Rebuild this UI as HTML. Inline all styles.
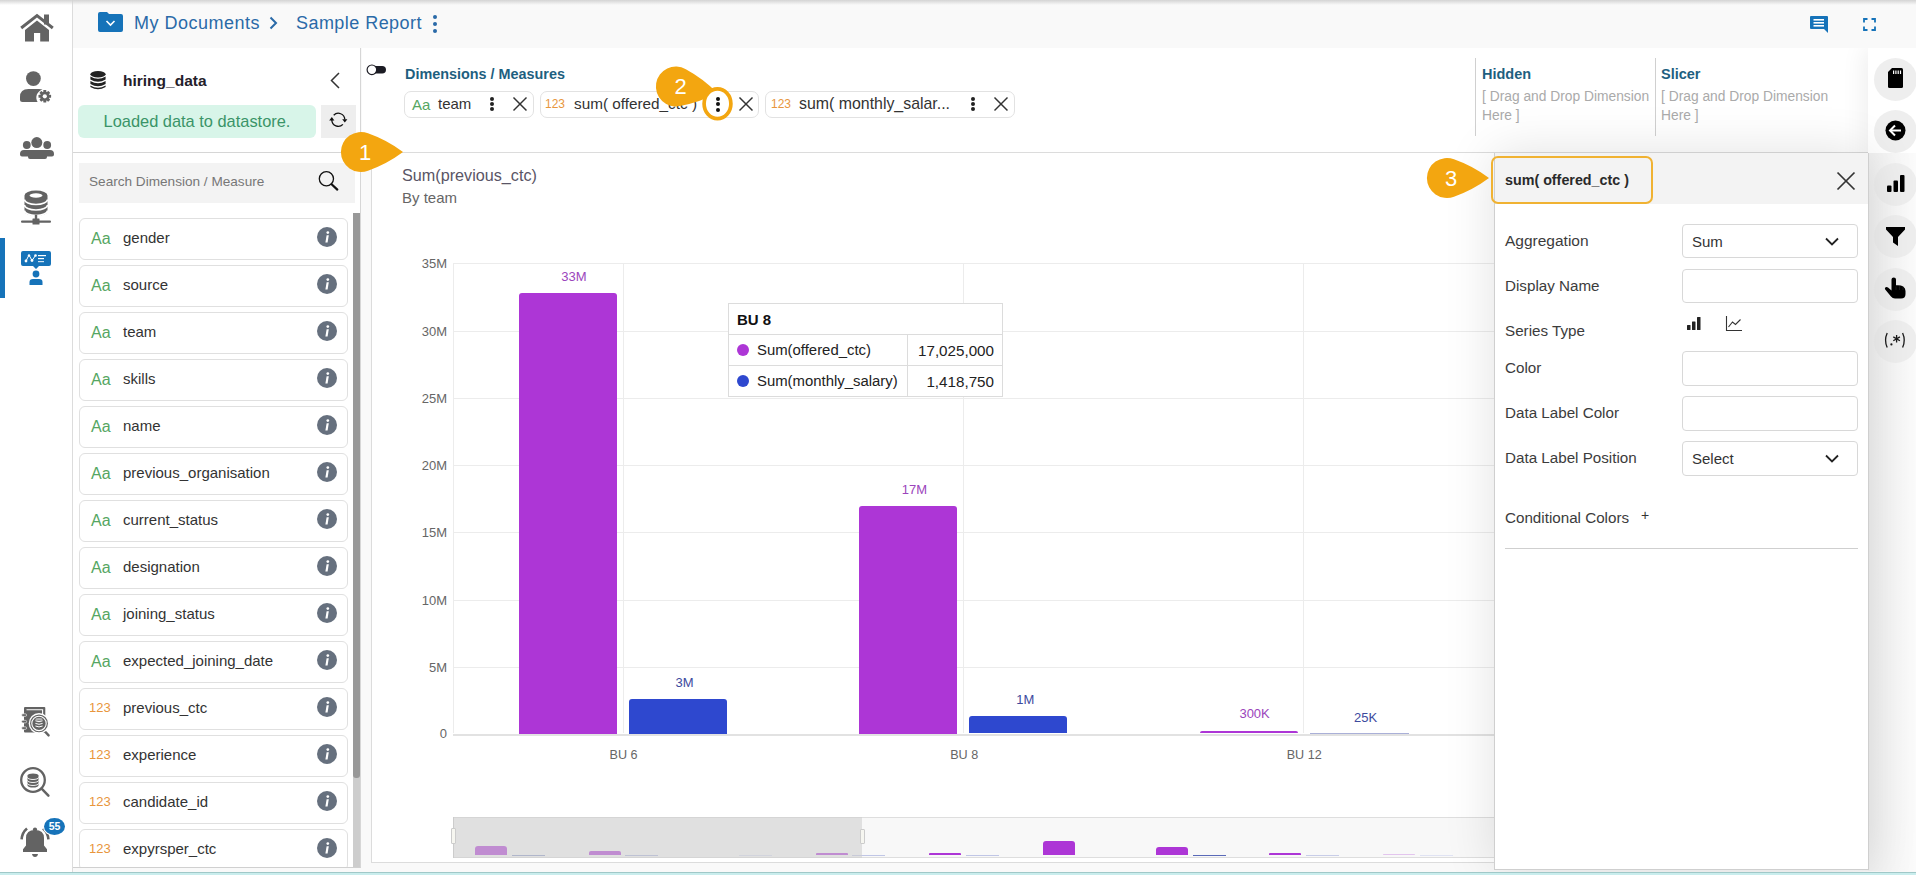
<!DOCTYPE html>
<html><head><meta charset="utf-8">
<style>
*{box-sizing:border-box;margin:0;padding:0}
html,body{width:1916px;height:875px;overflow:hidden;background:#fff;font-family:"Liberation Sans",sans-serif;color:#333}
.a{position:absolute}
.t{position:absolute;white-space:nowrap;line-height:1}
svg{position:absolute;overflow:visible}
</style></head><body>

<!-- main bg -->
<div class="a" style="left:73px;top:48px;width:1843px;height:827px;background:#f9f9f9"></div>

<!-- header -->
<div class="a" style="left:73px;top:0;width:1843px;height:48px;background:#f9f9f9"></div>
<div class="a" style="left:0;top:0;width:1916px;height:5px;background:linear-gradient(#d4d4d4,rgba(255,255,255,0))"></div>

<!-- sidebar -->
<div class="a" style="left:0;top:0;width:73px;height:875px;background:#fff;border-right:1px solid #dcdcdc"></div>
<div class="a" style="left:0;top:0;width:73px;height:5px;background:linear-gradient(#d4d4d4,rgba(255,255,255,0))"></div>

<!-- sidebar icons -->
<svg style="left:20px;top:14px" width="34" height="28" viewBox="0 0 34 28">
  <rect x="24" y="0.5" width="5" height="10" fill="#636363"/>
  <polyline points="1.2,14 17,1.6 32.8,14" fill="none" stroke="#636363" stroke-width="3"/>
  <path d="M5 16 L17 6.6 L29 16 V27.5 H20.2 V19 H14 V27.5 H5 Z" fill="#636363"/>
</svg>
<svg style="left:20px;top:70px" width="32" height="33" viewBox="0 0 32 33">
  <circle cx="13.4" cy="8.6" r="7.4" fill="#636363"/>
  <path d="M0 29.5 V27 Q0 19 8.5 19 H19 Q21 19 22.5 19.6 A8.2 8.2 0 0 0 17.6 32 H2.5 Q0 32 0 29.5 Z" fill="#636363"/>
  <g transform="translate(24.8,26.3)" fill="#636363">
    <circle r="4.6"/><rect x="-1.5" y="-6.3" width="3" height="12.6" rx="0.6" transform="rotate(0)"/><rect x="-1.5" y="-6.3" width="3" height="12.6" rx="0.6" transform="rotate(45)"/><rect x="-1.5" y="-6.3" width="3" height="12.6" rx="0.6" transform="rotate(90)"/><rect x="-1.5" y="-6.3" width="3" height="12.6" rx="0.6" transform="rotate(135)"/>
    <circle r="2.1" fill="#fff"/>
  </g>
</svg>
<svg style="left:20px;top:136px" width="35" height="24" viewBox="0 0 35 24">
  <circle cx="6.8" cy="9" r="3.9" fill="#636363"/>
  <circle cx="27.2" cy="9" r="3.9" fill="#636363"/>
  <circle cx="16.8" cy="6.6" r="5.5" fill="#636363"/>
  <path d="M0 18 Q0 14 4 14 H30 Q34 14 34 18 V18.5 Q34 20.5 32 20.5 H27 V21 Q27 23 25 23 H10 Q8 23 8 21 V20.5 H2 Q0 20.5 0 18.5 Z" fill="#636363"/>
</svg>
<svg style="left:21px;top:190px" width="30" height="35" viewBox="0 0 30 35">
  <path d="M3.5 5.5 A11.5 5 0 0 1 26.5 5.5 V21 A11.5 5 0 0 1 3.5 21 Z" fill="#636363"/>
  <ellipse cx="15" cy="5.5" rx="6.5" ry="2.2" fill="#fff"/>
  <path d="M3.5 9.5 A11.5 5 0 0 0 26.5 9.5" fill="none" stroke="#fff" stroke-width="1.6"/>
  <path d="M3.5 15 A11.5 5 0 0 0 26.5 15" fill="none" stroke="#fff" stroke-width="1.6"/>
  <path d="M3.5 20.5 A11.5 5 0 0 0 26.5 20.5" fill="none" stroke="#fff" stroke-width="1.6"/>
  <rect x="13.8" y="25" width="2.4" height="5" fill="#636363"/>
  <rect x="0" y="30.5" width="30" height="2.2" rx="1" fill="#636363"/>
  <rect x="11.5" y="28.5" width="7" height="6" rx="0.5" fill="#636363"/>
</svg>
<div class="a" style="left:0;top:238px;width:5px;height:60px;background:#1673b9"></div>
<svg style="left:21px;top:251px" width="30" height="35" viewBox="0 0 30 35">
  <path d="M2 0 H28 Q30 0 30 2 V13 Q30 15 28 15 H18 L15 18 L12 15 H2 Q0 15 0 13 V2 Q0 0 2 0 Z" fill="#1673b9"/>
  <polyline points="5,10 8,4 11,9.5 14.5,4.5" fill="none" stroke="#fff" stroke-width="1"/>
  <circle cx="5" cy="10" r="1.4" fill="#fff"/><circle cx="8" cy="4.5" r="1.2" fill="#fff"/><circle cx="11" cy="9.5" r="1.4" fill="#fff"/><circle cx="14.5" cy="4.5" r="1.3" fill="#fff"/>
  <rect x="17" y="4" width="8" height="1.2" fill="#fff"/>
  <rect x="17" y="7" width="6" height="1.2" fill="#fff"/>
  <rect x="17" y="10" width="6" height="1.2" fill="#cfe3f3"/>
  <circle cx="15" cy="23" r="3.4" fill="#1673b9"/>
  <path d="M8.5 34 V31 Q8.5 28 12 28 H18 Q21.5 28 21.5 31 V34 Z" fill="#1673b9"/>
</svg>

<svg style="left:21px;top:706px" width="30" height="31" viewBox="0 0 30 31">
  <rect x="3" y="1" width="21.3" height="25.6" rx="1" fill="#636363"/>
  <path d="M5.5 3.8 H21.6 V12" fill="none" stroke="#fff" stroke-width="1.1"/>
  <rect x="0.6" y="7.8" width="5" height="2.6" rx="1.3" fill="#636363" stroke="#fff" stroke-width="0.6"/>
  <rect x="0.6" y="14.3" width="5" height="2.6" rx="1.3" fill="#636363" stroke="#fff" stroke-width="0.6"/>
  <rect x="0.6" y="20.8" width="5" height="2.6" rx="1.3" fill="#636363" stroke="#fff" stroke-width="0.6"/>
  <line x1="22.5" y1="24" x2="27.6" y2="29.4" stroke="#636363" stroke-width="2.4" stroke-linecap="round"/>
  <circle cx="18" cy="17.4" r="10.3" fill="#fff"/>
  <circle cx="18" cy="17.4" r="8.9" fill="#636363"/>
  <circle cx="18" cy="17.4" r="7.2" fill="none" stroke="#fff" stroke-width="1.1"/>
  <ellipse cx="18" cy="13.2" rx="3.6" ry="1.3" fill="#fff" opacity="0.5"/>
  <path d="M14.4 14.8 Q18 16.6 21.6 14.8 M14.4 17.4 Q18 19.2 21.6 17.4 M14.4 20 Q18 21.8 21.6 20" fill="none" stroke="#fff" stroke-width="1"/>
</svg>
<svg style="left:20px;top:766px" width="30" height="31" viewBox="0 0 30 31">
  <circle cx="13" cy="14" r="11.8" fill="none" stroke="#636363" stroke-width="2.3"/>
  <line x1="21.6" y1="22.6" x2="28.4" y2="29.6" stroke="#636363" stroke-width="2.5" stroke-linecap="round"/>
  <path d="M7.5 9.5 A5.5 2 0 0 1 18.5 9.5 V19.5 A5.5 2 0 0 1 7.5 19.5 Z" fill="#636363"/>
  <path d="M7.5 11.5 A5.5 2 0 0 0 18.5 11.5 M7.5 14.5 A5.5 2 0 0 0 18.5 14.5 M7.5 17.5 A5.5 2 0 0 0 18.5 17.5" fill="none" stroke="#fff" stroke-width="0.9"/>
</svg>
<svg style="left:20px;top:826px" width="30" height="32" viewBox="0 0 30 32">
  <circle cx="15" cy="3.6" r="2.1" fill="#636363"/>
  <path d="M6 12 Q6 4.2 15 4 Q24 4.2 24 12 V19.5 L27 23.3 V26 H3 V23.3 L6 19.5 Z" fill="#636363"/>
  <path d="M12 28 H18 Q17.5 31 15 31 Q12.5 31 12 28 Z" fill="#636363"/>
  <path d="M1.6 13.4 Q2 6.6 7 2.4" fill="none" stroke="#636363" stroke-width="2.6"/>
  <path d="M28.4 13.4 Q28 6.6 23 2.4" fill="none" stroke="#636363" stroke-width="2.6"/>
</svg>
<div class="a" style="left:44px;top:818px;width:21px;height:17px;border-radius:50%;background:#1673b9;box-shadow:0 0 0 1px #fff"></div>
<div class="t" style="left:44px;top:821.3px;width:21px;text-align:center;font-size:10.5px;font-weight:700;color:#fff">55</div>

<!-- header content -->
<svg style="left:98px;top:12px" width="25" height="20" viewBox="0 0 25 20">
  <path d="M2 0 H9 L11 2 H23 Q25 2 25 4 V18 Q25 20 23 20 H2 Q0 20 0 18 V2 Q0 0 2 0 Z" fill="#1673b9"/>
  <polyline points="8.5,9 12.5,13 16.5,9" fill="none" stroke="#fff" stroke-width="1.6"/>
</svg>
<div class="t" style="left:134px;top:14px;font-size:18px;letter-spacing:0.5px;color:#2a6aa8">My Documents</div>
<svg style="left:269px;top:16px" width="9" height="14" viewBox="0 0 9 14"><polyline points="1.5,1.5 7,7 1.5,12.5" fill="none" stroke="#2a6aa8" stroke-width="2"/></svg>
<div class="t" style="left:296px;top:14px;font-size:18px;letter-spacing:0.45px;color:#2a6aa8">Sample Report</div>
<div class="a" style="left:433px;top:15px;width:4px;height:4px;border-radius:2px;background:#2a6aa8"></div>
<div class="a" style="left:433px;top:22px;width:4px;height:4px;border-radius:2px;background:#2a6aa8"></div>
<div class="a" style="left:433px;top:29px;width:4px;height:4px;border-radius:2px;background:#2a6aa8"></div>

<svg style="left:1810px;top:16px" width="18" height="17" viewBox="0 0 18 17">
  <path d="M1 0 H17 Q18 0 18 1 V17 L14 13 H1 Q0 13 0 12 V1 Q0 0 1 0 Z" fill="#1673b9"/>
  <rect x="3.5" y="3" width="10.5" height="1.6" fill="#fff"/><rect x="3.5" y="6" width="10.5" height="1.6" fill="#fff"/><rect x="3.5" y="9" width="10.5" height="1.6" fill="#fff"/>
</svg>
<svg style="left:1863px;top:18px" width="13" height="13" viewBox="0 0 13 13" fill="none" stroke="#1673b9" stroke-width="1.8">
  <polyline points="1,4.5 1,1 4.5,1"/><polyline points="8.5,1 12,1 12,4.5"/><polyline points="12,8.5 12,12 8.5,12"/><polyline points="4.5,12 1,12 1,8.5"/>
</svg>

<!-- left panel -->
<div class="a" style="left:73px;top:48px;width:288px;height:820px;background:#fff;border-right:1px solid #d6d6d6;border-bottom:1px solid #d0d0d0"></div>
<svg style="left:90px;top:71px" width="16" height="19" viewBox="0 0 16 19">
  <ellipse cx="8" cy="3.2" rx="7.6" ry="3.2" fill="#222"/>
  <path d="M0.4 5.5 Q8 10 15.6 5.5 V8.5 Q8 13 0.4 8.5 Z" fill="#222"/>
  <path d="M0.4 10 Q8 14.5 15.6 10 V13 Q8 17.5 0.4 13 Z" fill="#222"/>
  <path d="M0.4 14.5 Q8 19 15.6 14.5 V16 Q8 20.5 0.4 16 Z" fill="#222"/>
</svg>
<div class="t" style="left:123px;top:73px;font-size:15.5px;font-weight:700;color:#24202a">hiring_data</div>
<svg style="left:330px;top:72px" width="10" height="17" viewBox="0 0 10 17"><polyline points="9,1 1.5,8.5 9,16" fill="none" stroke="#333" stroke-width="1.5"/></svg>
<div class="a" style="left:78px;top:105px;width:238px;height:33px;border-radius:6px;background:#d8f5e9"></div>
<div class="t" style="left:78px;top:113px;width:238px;text-align:center;font-size:16.4px;color:#3a9468">Loaded data to datastore.</div>
<div class="a" style="left:321px;top:105px;width:35px;height:33px;background:#eeeeee"></div>
<svg style="left:328px;top:110px" width="21" height="20" viewBox="0 0 21 20">
  <path d="M5.7 5.2 A6.5 6.5 0 0 1 16.8 9.6" fill="none" stroke="#111" stroke-width="1.3"/>
  <path d="M14.9 14.4 A6.5 6.5 0 0 1 3.8 10" fill="none" stroke="#111" stroke-width="1.3"/>
  <path d="M14.2 9.2 H19.4 L16.8 12.6 Z" fill="#111"/>
  <path d="M1.2 10.4 H6.4 L3.8 7 Z" fill="#111"/>
</svg>
<div class="a" style="left:73px;top:152px;width:288px;height:1px;background:#d6d6d6"></div>
<div class="a" style="left:79px;top:163px;width:276px;height:40px;background:#f3f3f3"></div>
<div class="t" style="left:89px;top:175px;font-size:13.6px;color:#777">Search Dimension / Measure</div>
<svg style="left:318px;top:171px" width="21" height="21" viewBox="0 0 21 21" fill="none" stroke="#111">
  <circle cx="8.4" cy="7.8" r="7.1" stroke-width="1.3"/><line x1="13.6" y1="13.2" x2="19.3" y2="18.6" stroke-width="2.2" stroke-linecap="round"/>
</svg>
<!-- scrollbar -->
<div class="a" style="left:353px;top:213px;width:7px;height:654px;background:#cdcdcd"></div>
<div class="a" style="left:353px;top:213px;width:7px;height:565px;background:#999;border-radius:0 0 3px 3px"></div>
<!-- list -->
<div class="a" style="left:0;top:0;width:361px;height:867px;overflow:hidden">
<div class="a" style="left:79px;top:218px;width:269px;height:42px;border:1px solid #e0e0e0;border-radius:6px;background:#fff"></div>
<div class="t" style="left:91px;top:230.5px;font-size:16px;color:#55a662">Aa</div><div class="t" style="left:123px;top:230px;font-size:15px;color:#333">gender</div>
<svg style="left:317px;top:227.0px" width="20" height="20" viewBox="0 0 20 20"><circle cx="10" cy="10" r="10" fill="#66707e"/><circle cx="10.8" cy="5.6" r="1.35" fill="#fff"/><path d="M9.6 8.3 H11.8 L10.6 15.6 H8.4 Z" fill="#fff"/></svg>
<div class="a" style="left:79px;top:265px;width:269px;height:42px;border:1px solid #e0e0e0;border-radius:6px;background:#fff"></div>
<div class="t" style="left:91px;top:277.5px;font-size:16px;color:#55a662">Aa</div><div class="t" style="left:123px;top:277px;font-size:15px;color:#333">source</div>
<svg style="left:317px;top:274.0px" width="20" height="20" viewBox="0 0 20 20"><circle cx="10" cy="10" r="10" fill="#66707e"/><circle cx="10.8" cy="5.6" r="1.35" fill="#fff"/><path d="M9.6 8.3 H11.8 L10.6 15.6 H8.4 Z" fill="#fff"/></svg>
<div class="a" style="left:79px;top:312px;width:269px;height:42px;border:1px solid #e0e0e0;border-radius:6px;background:#fff"></div>
<div class="t" style="left:91px;top:324.5px;font-size:16px;color:#55a662">Aa</div><div class="t" style="left:123px;top:324px;font-size:15px;color:#333">team</div>
<svg style="left:317px;top:321.0px" width="20" height="20" viewBox="0 0 20 20"><circle cx="10" cy="10" r="10" fill="#66707e"/><circle cx="10.8" cy="5.6" r="1.35" fill="#fff"/><path d="M9.6 8.3 H11.8 L10.6 15.6 H8.4 Z" fill="#fff"/></svg>
<div class="a" style="left:79px;top:359px;width:269px;height:42px;border:1px solid #e0e0e0;border-radius:6px;background:#fff"></div>
<div class="t" style="left:91px;top:371.5px;font-size:16px;color:#55a662">Aa</div><div class="t" style="left:123px;top:371px;font-size:15px;color:#333">skills</div>
<svg style="left:317px;top:368.0px" width="20" height="20" viewBox="0 0 20 20"><circle cx="10" cy="10" r="10" fill="#66707e"/><circle cx="10.8" cy="5.6" r="1.35" fill="#fff"/><path d="M9.6 8.3 H11.8 L10.6 15.6 H8.4 Z" fill="#fff"/></svg>
<div class="a" style="left:79px;top:406px;width:269px;height:42px;border:1px solid #e0e0e0;border-radius:6px;background:#fff"></div>
<div class="t" style="left:91px;top:418.5px;font-size:16px;color:#55a662">Aa</div><div class="t" style="left:123px;top:418px;font-size:15px;color:#333">name</div>
<svg style="left:317px;top:415.0px" width="20" height="20" viewBox="0 0 20 20"><circle cx="10" cy="10" r="10" fill="#66707e"/><circle cx="10.8" cy="5.6" r="1.35" fill="#fff"/><path d="M9.6 8.3 H11.8 L10.6 15.6 H8.4 Z" fill="#fff"/></svg>
<div class="a" style="left:79px;top:453px;width:269px;height:42px;border:1px solid #e0e0e0;border-radius:6px;background:#fff"></div>
<div class="t" style="left:91px;top:465.5px;font-size:16px;color:#55a662">Aa</div><div class="t" style="left:123px;top:465px;font-size:15px;color:#333">previous_organisation</div>
<svg style="left:317px;top:462.0px" width="20" height="20" viewBox="0 0 20 20"><circle cx="10" cy="10" r="10" fill="#66707e"/><circle cx="10.8" cy="5.6" r="1.35" fill="#fff"/><path d="M9.6 8.3 H11.8 L10.6 15.6 H8.4 Z" fill="#fff"/></svg>
<div class="a" style="left:79px;top:500px;width:269px;height:42px;border:1px solid #e0e0e0;border-radius:6px;background:#fff"></div>
<div class="t" style="left:91px;top:512.5px;font-size:16px;color:#55a662">Aa</div><div class="t" style="left:123px;top:512px;font-size:15px;color:#333">current_status</div>
<svg style="left:317px;top:509.0px" width="20" height="20" viewBox="0 0 20 20"><circle cx="10" cy="10" r="10" fill="#66707e"/><circle cx="10.8" cy="5.6" r="1.35" fill="#fff"/><path d="M9.6 8.3 H11.8 L10.6 15.6 H8.4 Z" fill="#fff"/></svg>
<div class="a" style="left:79px;top:547px;width:269px;height:42px;border:1px solid #e0e0e0;border-radius:6px;background:#fff"></div>
<div class="t" style="left:91px;top:559.5px;font-size:16px;color:#55a662">Aa</div><div class="t" style="left:123px;top:559px;font-size:15px;color:#333">designation</div>
<svg style="left:317px;top:556.0px" width="20" height="20" viewBox="0 0 20 20"><circle cx="10" cy="10" r="10" fill="#66707e"/><circle cx="10.8" cy="5.6" r="1.35" fill="#fff"/><path d="M9.6 8.3 H11.8 L10.6 15.6 H8.4 Z" fill="#fff"/></svg>
<div class="a" style="left:79px;top:594px;width:269px;height:42px;border:1px solid #e0e0e0;border-radius:6px;background:#fff"></div>
<div class="t" style="left:91px;top:606.5px;font-size:16px;color:#55a662">Aa</div><div class="t" style="left:123px;top:606px;font-size:15px;color:#333">joining_status</div>
<svg style="left:317px;top:603.0px" width="20" height="20" viewBox="0 0 20 20"><circle cx="10" cy="10" r="10" fill="#66707e"/><circle cx="10.8" cy="5.6" r="1.35" fill="#fff"/><path d="M9.6 8.3 H11.8 L10.6 15.6 H8.4 Z" fill="#fff"/></svg>
<div class="a" style="left:79px;top:641px;width:269px;height:42px;border:1px solid #e0e0e0;border-radius:6px;background:#fff"></div>
<div class="t" style="left:91px;top:653.5px;font-size:16px;color:#55a662">Aa</div><div class="t" style="left:123px;top:653px;font-size:15px;color:#333">expected_joining_date</div>
<svg style="left:317px;top:650.0px" width="20" height="20" viewBox="0 0 20 20"><circle cx="10" cy="10" r="10" fill="#66707e"/><circle cx="10.8" cy="5.6" r="1.35" fill="#fff"/><path d="M9.6 8.3 H11.8 L10.6 15.6 H8.4 Z" fill="#fff"/></svg>
<div class="a" style="left:79px;top:688px;width:269px;height:42px;border:1px solid #e0e0e0;border-radius:6px;background:#fff"></div>
<div class="t" style="left:89px;top:701px;font-size:13px;color:#e8963c">123</div><div class="t" style="left:123px;top:700px;font-size:15px;color:#333">previous_ctc</div>
<svg style="left:317px;top:697.0px" width="20" height="20" viewBox="0 0 20 20"><circle cx="10" cy="10" r="10" fill="#66707e"/><circle cx="10.8" cy="5.6" r="1.35" fill="#fff"/><path d="M9.6 8.3 H11.8 L10.6 15.6 H8.4 Z" fill="#fff"/></svg>
<div class="a" style="left:79px;top:735px;width:269px;height:42px;border:1px solid #e0e0e0;border-radius:6px;background:#fff"></div>
<div class="t" style="left:89px;top:748px;font-size:13px;color:#e8963c">123</div><div class="t" style="left:123px;top:747px;font-size:15px;color:#333">experience</div>
<svg style="left:317px;top:744.0px" width="20" height="20" viewBox="0 0 20 20"><circle cx="10" cy="10" r="10" fill="#66707e"/><circle cx="10.8" cy="5.6" r="1.35" fill="#fff"/><path d="M9.6 8.3 H11.8 L10.6 15.6 H8.4 Z" fill="#fff"/></svg>
<div class="a" style="left:79px;top:782px;width:269px;height:42px;border:1px solid #e0e0e0;border-radius:6px;background:#fff"></div>
<div class="t" style="left:89px;top:795px;font-size:13px;color:#e8963c">123</div><div class="t" style="left:123px;top:794px;font-size:15px;color:#333">candidate_id</div>
<svg style="left:317px;top:791.0px" width="20" height="20" viewBox="0 0 20 20"><circle cx="10" cy="10" r="10" fill="#66707e"/><circle cx="10.8" cy="5.6" r="1.35" fill="#fff"/><path d="M9.6 8.3 H11.8 L10.6 15.6 H8.4 Z" fill="#fff"/></svg>
<div class="a" style="left:79px;top:829px;width:269px;height:42px;border:1px solid #e0e0e0;border-radius:6px;background:#fff"></div>
<div class="t" style="left:89px;top:842px;font-size:13px;color:#e8963c">123</div><div class="t" style="left:123px;top:841px;font-size:15px;color:#333">expyrsper_ctc</div>
<svg style="left:317px;top:838.0px" width="20" height="20" viewBox="0 0 20 20"><circle cx="10" cy="10" r="10" fill="#66707e"/><circle cx="10.8" cy="5.6" r="1.35" fill="#fff"/><path d="M9.6 8.3 H11.8 L10.6 15.6 H8.4 Z" fill="#fff"/></svg>
</div>

<!-- top config area -->
<div class="a" style="left:362px;top:48px;width:1506px;height:104px;background:#fff"></div>
<div class="a" style="left:362px;top:152px;width:1506px;height:1px;background:#dcdcdc"></div>
<svg style="left:366px;top:64px" width="21" height="13" viewBox="0 0 21 13">
  <path d="M6 2.1 H16.2 A3.75 3.75 0 0 1 16.2 9.6 H6 Z" fill="#1c1c24"/>
  <circle cx="5.9" cy="5.8" r="4.8" fill="#fff" stroke="#1c1c24" stroke-width="1.2"/>
</svg>
<div class="t" style="left:405px;top:67px;font-size:14.4px;font-weight:700;color:#1e5f7f">Dimensions / Measures</div>

<div class="a" style="left:404px;top:91px;width:130px;height:27px;border:1px solid #e2e2e2;border-radius:7px;background:#fff"></div>
<div class="t" style="left:412px;top:97px;font-size:15px;color:#55a662">Aa</div>
<div class="t" style="left:438px;top:96px;font-size:15px;color:#333">team</div>
<div class="a" style="left:490px;top:97px;width:4px;height:4px;border-radius:2px;background:#222"></div><div class="a" style="left:490px;top:102px;width:4px;height:4px;border-radius:2px;background:#222"></div><div class="a" style="left:490px;top:107px;width:4px;height:4px;border-radius:2px;background:#222"></div>
<svg style="left:513px;top:97px" width="14" height="14" viewBox="0 0 14 14" stroke="#333" stroke-width="1.5"><line x1="0.5" y1="0.5" x2="13.5" y2="13.5"/><line x1="13.5" y1="0.5" x2="0.5" y2="13.5"/></svg>

<div class="a" style="left:540px;top:91px;width:219px;height:27px;border:1px solid #e2e2e2;border-radius:7px;background:#fff"></div>
<div class="t" style="left:545px;top:98px;font-size:12px;color:#e8963c">123</div>
<div class="t" style="left:574px;top:96px;font-size:15.3px;color:#333">sum( offered_ctc )</div>
<div class="a" style="left:716px;top:97px;width:4px;height:4px;border-radius:2px;background:#222"></div><div class="a" style="left:716px;top:102px;width:4px;height:4px;border-radius:2px;background:#222"></div><div class="a" style="left:716px;top:107px;width:4px;height:4px;border-radius:2px;background:#222"></div>
<svg style="left:739px;top:97px" width="14" height="14" viewBox="0 0 14 14" stroke="#333" stroke-width="1.5"><line x1="0.5" y1="0.5" x2="13.5" y2="13.5"/><line x1="13.5" y1="0.5" x2="0.5" y2="13.5"/></svg>

<div class="a" style="left:765px;top:91px;width:250px;height:27px;border:1px solid #e2e2e2;border-radius:7px;background:#fff"></div>
<div class="t" style="left:771px;top:98px;font-size:12px;color:#e8963c">123</div>
<div class="t" style="left:799px;top:96px;font-size:15.9px;color:#333">sum( monthly_salar...</div>
<div class="a" style="left:971px;top:97px;width:4px;height:4px;border-radius:2px;background:#222"></div><div class="a" style="left:971px;top:102px;width:4px;height:4px;border-radius:2px;background:#222"></div><div class="a" style="left:971px;top:107px;width:4px;height:4px;border-radius:2px;background:#222"></div>
<svg style="left:994px;top:97px" width="14" height="14" viewBox="0 0 14 14" stroke="#333" stroke-width="1.5"><line x1="0.5" y1="0.5" x2="13.5" y2="13.5"/><line x1="13.5" y1="0.5" x2="0.5" y2="13.5"/></svg>

<div class="a" style="left:1475px;top:58px;width:1px;height:78px;background:#d0d0d0"></div>
<div class="t" style="left:1482px;top:67px;font-size:14.5px;font-weight:700;color:#1e5f7f">Hidden</div>
<div class="t" style="left:1482px;top:89.5px;font-size:13.8px;color:#aaa">[ Drag and Drop Dimension</div>
<div class="t" style="left:1482px;top:109px;font-size:13.8px;color:#aaa">Here ]</div>
<div class="a" style="left:1655px;top:58px;width:1px;height:78px;background:#d0d0d0"></div>
<div class="t" style="left:1661px;top:67px;font-size:14.5px;font-weight:700;color:#1e5f7f">Slicer</div>
<div class="t" style="left:1661px;top:89.5px;font-size:13.8px;color:#aaa">[ Drag and Drop Dimension</div>
<div class="t" style="left:1661px;top:109px;font-size:13.8px;color:#aaa">Here ]</div>

<!-- chart card -->
<div class="a" style="left:371px;top:153px;width:1497px;height:710px;background:#fff;border-left:1px solid #dcdcdc;border-bottom:1px solid #dcdcdc"></div>
<div class="t" style="left:402px;top:167px;font-size:16.2px;color:#5a5566">Sum(previous_ctc)</div>
<div class="t" style="left:402px;top:190px;font-size:15px;color:#666">By team</div>
<!--CHARTSTART-->
<div class="a" style="left:453px;top:263.0px;width:1100px;height:1px;background:#ececec"></div>
<div class="t" style="left:397px;top:256.5px;width:50px;text-align:right;font-size:13px;color:#666">35M</div>
<div class="a" style="left:453px;top:331.0px;width:1100px;height:1px;background:#ececec"></div>
<div class="t" style="left:397px;top:324.5px;width:50px;text-align:right;font-size:13px;color:#666">30M</div>
<div class="a" style="left:453px;top:398.0px;width:1100px;height:1px;background:#ececec"></div>
<div class="t" style="left:397px;top:391.5px;width:50px;text-align:right;font-size:13px;color:#666">25M</div>
<div class="a" style="left:453px;top:465.0px;width:1100px;height:1px;background:#ececec"></div>
<div class="t" style="left:397px;top:458.5px;width:50px;text-align:right;font-size:13px;color:#666">20M</div>
<div class="a" style="left:453px;top:532.0px;width:1100px;height:1px;background:#ececec"></div>
<div class="t" style="left:397px;top:525.5px;width:50px;text-align:right;font-size:13px;color:#666">15M</div>
<div class="a" style="left:453px;top:600.0px;width:1100px;height:1px;background:#ececec"></div>
<div class="t" style="left:397px;top:593.5px;width:50px;text-align:right;font-size:13px;color:#666">10M</div>
<div class="a" style="left:453px;top:667.0px;width:1100px;height:1px;background:#ececec"></div>
<div class="t" style="left:397px;top:660.5px;width:50px;text-align:right;font-size:13px;color:#666">5M</div>
<div class="a" style="left:453px;top:734px;width:1100px;height:1.5px;background:#e2e2e2"></div>
<div class="t" style="left:397px;top:727.0px;width:50px;text-align:right;font-size:13px;color:#666">0</div>
<div class="a" style="left:453px;top:263px;width:1px;height:470px;background:#ececec"></div>
<div class="a" style="left:623px;top:263px;width:1px;height:470px;background:#ececec"></div>
<div class="a" style="left:963px;top:263px;width:1px;height:470px;background:#ececec"></div>
<div class="a" style="left:1303px;top:263px;width:1px;height:470px;background:#ececec"></div>
<div class="a" style="left:519px;top:293px;width:98px;height:440.5px;background:#ad36d6;border-radius:3px 3px 0 0"></div>
<div class="a" style="left:629px;top:699px;width:98px;height:34.5px;background:#2e48cf;border-radius:3px 3px 0 0"></div>
<div class="a" style="left:859px;top:506px;width:98px;height:227.5px;background:#ad36d6;border-radius:3px 3px 0 0"></div>
<div class="a" style="left:969px;top:716.3px;width:98px;height:17.2px;background:#2e48cf;border-radius:3px 3px 0 0"></div>
<div class="a" style="left:1199.5px;top:731.3px;width:98px;height:2.2px;background:#ad36d6;border-radius:3px 3px 0 0"></div>
<div class="a" style="left:1309.5px;top:733px;width:99px;height:1px;background:#aab0d8"></div>
<div class="t" style="left:534.0px;top:269.5px;width:80px;text-align:center;font-size:13px;color:#9b45bc">33M</div>
<div class="t" style="left:644.5px;top:675.5px;width:80px;text-align:center;font-size:13px;color:#3d4a9e">3M</div>
<div class="t" style="left:874.4px;top:482.8px;width:80px;text-align:center;font-size:13px;color:#9b45bc">17M</div>
<div class="t" style="left:985.2px;top:692.8px;width:80px;text-align:center;font-size:13px;color:#3d4a9e">1M</div>
<div class="t" style="left:1214.6px;top:707.3px;width:80px;text-align:center;font-size:13px;color:#9b45bc">300K</div>
<div class="t" style="left:1325.6px;top:711.4px;width:80px;text-align:center;font-size:13px;color:#3d4a9e">25K</div>
<div class="t" style="left:583.6px;top:749.3px;width:80px;text-align:center;font-size:12.6px;color:#666">BU 6</div>
<div class="t" style="left:924.2px;top:749.3px;width:80px;text-align:center;font-size:12.6px;color:#666">BU 8</div>
<div class="t" style="left:1264.2px;top:749.3px;width:80px;text-align:center;font-size:12.6px;color:#666">BU 12</div>
<div class="a" style="left:728px;top:303px;width:275px;height:94px;background:#fff;border:1px solid #dcdcdc"></div>
<div class="a" style="left:728px;top:334px;width:275px;height:1px;background:#dcdcdc"></div>
<div class="a" style="left:728px;top:365px;width:275px;height:1px;background:#dcdcdc"></div>
<div class="a" style="left:907px;top:334px;width:1px;height:63px;background:#dcdcdc"></div>
<div class="t" style="left:737px;top:312px;font-size:15px;font-weight:700;color:#111">BU 8</div>
<div class="a" style="left:737px;top:343.5px;width:12px;height:12px;border-radius:6px;background:#ad36d6"></div>
<div class="t" style="left:757px;top:343px;font-size:14.9px;color:#222">Sum(offered_ctc)</div>
<div class="t" style="left:880px;top:343px;width:114px;text-align:right;font-size:15.2px;color:#222">17,025,000</div>
<div class="a" style="left:737px;top:374.5px;width:12px;height:12px;border-radius:6px;background:#2e48cf"></div>
<div class="t" style="left:757px;top:374px;font-size:14.9px;color:#222">Sum(monthly_salary)</div>
<div class="t" style="left:880px;top:374px;width:114px;text-align:right;font-size:15.2px;color:#222">1,418,750</div>
<div class="a" style="left:453px;top:817px;width:1100px;height:41px;background:#f8f8f8;border-top:1px solid #dedede;border-bottom:1px solid #dedede"></div>
<div class="a" style="left:475px;top:845.7px;width:32px;height:9.3px;background:#ad36d6;border-radius:3.0px 3.0px 0 0"></div>
<div class="a" style="left:589px;top:851px;width:32px;height:4.0px;background:#ad36d6;border-radius:2.0px 2.0px 0 0"></div>
<div class="a" style="left:816px;top:853px;width:32px;height:2.0px;background:#ad36d6;border-radius:1.0px 1.0px 0 0"></div>
<div class="a" style="left:929px;top:853px;width:32px;height:2.0px;background:#ad36d6;border-radius:1.0px 1.0px 0 0"></div>
<div class="a" style="left:1043px;top:841px;width:32px;height:14.0px;background:#ad36d6;border-radius:3.0px 3.0px 0 0"></div>
<div class="a" style="left:1156px;top:847px;width:32px;height:8.0px;background:#ad36d6;border-radius:3.0px 3.0px 0 0"></div>
<div class="a" style="left:1269px;top:853px;width:32px;height:2.0px;background:#ad36d6;border-radius:1.0px 1.0px 0 0"></div>
<div class="a" style="left:1383px;top:853.5px;width:32px;height:1.5px;background:#e3c5ee;border-radius:0.8px 0.8px 0 0"></div>
<div class="a" style="left:512px;top:854.5px;width:33px;height:1.5px;background:#8a96c8"></div>
<div class="a" style="left:625px;top:854.5px;width:33px;height:1.5px;background:#aab2dc"></div>
<div class="a" style="left:739px;top:854.5px;width:33px;height:1.5px;background:#d8dcf0"></div>
<div class="a" style="left:852px;top:854.5px;width:33px;height:1.5px;background:#c0c6e6"></div>
<div class="a" style="left:966px;top:854.5px;width:33px;height:1.5px;background:#c0c6e6"></div>
<div class="a" style="left:1193px;top:854.5px;width:33px;height:1.5px;background:#5a6ab8"></div>
<div class="a" style="left:1306px;top:854.5px;width:33px;height:1.5px;background:#c8cde8"></div>
<div class="a" style="left:1420px;top:854.5px;width:33px;height:1.5px;background:#e0e3f3"></div>
<div class="a" style="left:453px;top:817px;width:409px;height:41px;background:rgba(206,206,206,0.57);border-left:1px solid #ccc"></div>
<div class="a" style="left:451px;top:828px;width:5px;height:16px;background:#f6f6f0;border:1px solid #ccc;border-radius:1px"></div>
<div class="a" style="left:860px;top:829px;width:5px;height:15px;background:#f6f6f0;border:1px solid #ccc;border-radius:1px"></div>
<!--CHARTEND-->

<!-- right strip -->
<div class="a" style="left:1868px;top:48px;width:48px;height:823px;background:#fff;box-shadow:-4px 0 24px rgba(0,0,0,0.07);clip-path:inset(0 0 0 -60px)"></div>
<div class="a" style="left:1868px;top:153px;width:48px;height:718px;background:linear-gradient(to right,rgba(0,0,0,0.06),rgba(0,0,0,0.015))"></div>
<div class="a" style="left:1874px;top:58px;width:43px;height:43px;border-radius:22px;background:#eeeeee"></div>
<div class="a" style="left:1874px;top:110px;width:43px;height:43px;border-radius:22px;background:#eeeeee"></div>
<div class="a" style="left:1874px;top:163px;width:43px;height:43px;border-radius:22px;background:#eeeeee"></div>
<div class="a" style="left:1874px;top:215px;width:43px;height:43px;border-radius:22px;background:#eeeeee"></div>
<div class="a" style="left:1874px;top:268px;width:43px;height:43px;border-radius:22px;background:#eeeeee"></div>
<div class="a" style="left:1874px;top:320px;width:43px;height:43px;border-radius:22px;background:#eeeeee"></div>
<svg style="left:1888px;top:68px" width="15" height="20" viewBox="0 0 15 20"><path d="M4 0 H13.5 Q15 0 15 1.5 V18.5 Q15 20 13.5 20 H1.5 Q0 20 0 18.5 V4 Z" fill="#000"/><rect x="5" y="2.5" width="1.2" height="3.5" fill="#fff"/><rect x="7.3" y="2.5" width="1.2" height="3.5" fill="#fff"/><rect x="9.6" y="2.5" width="1.2" height="3.5" fill="#fff"/><rect x="11.9" y="2.5" width="1.2" height="3.5" fill="#fff"/></svg>
<svg style="left:1885px;top:120px" width="21" height="21" viewBox="0 0 21 21"><circle cx="10.5" cy="10.5" r="10" fill="#000"/><polyline points="10,5.5 5,10.5 10,15.5" fill="none" stroke="#fff" stroke-width="2"/><line x1="5.5" y1="10.5" x2="16" y2="10.5" stroke="#fff" stroke-width="2"/></svg>
<svg style="left:1887px;top:175px" width="18" height="17" viewBox="0 0 18 17" fill="#000"><rect x="0" y="10.5" width="4.5" height="6.5" rx="1"/><rect x="6.5" y="5.5" width="4.5" height="11.5" rx="1"/><rect x="13" y="0" width="4.5" height="17" rx="1"/></svg>
<svg style="left:1886px;top:227px" width="19" height="19" viewBox="0 0 19 19"><path d="M0 0 H19 V2.5 L12 10 V19 L7 15.5 V10 L0 2.5 Z" fill="#000"/></svg>
<svg style="left:1884px;top:277px" width="22" height="23" viewBox="0 0 22 23"><path d="M7.5 2.5 Q7.5 0.5 9.75 0.5 Q12 0.5 12 2.5 V8.3 Q16.5 7.8 19.2 9.5 Q21.5 11 21.5 14 V17 Q21.5 21.5 17 21.5 H11 Q8.5 21.5 7 19.5 L1.2 12.5 Q0.3 11 1.6 10.2 Q2.8 9.5 4 10.5 L7.5 13.5 Z" fill="#000"/><path d="M12 9.5 V13 M15.5 9.2 V13 M19 10.2 V13" stroke="#2a2a2a" stroke-width="0.6"/></svg>
<svg style="left:1883px;top:332px" width="24" height="17" viewBox="0 0 24 17" fill="none" stroke="#1a1a1a">
  <path d="M4.2 1 Q0.9 8.3 4.2 15.6" stroke-width="1.3"/>
  <circle cx="8.4" cy="12.4" r="1.1" fill="#1a1a1a" stroke="none"/>
  <path d="M13.6 3 V10.6 M10.3 4.9 L16.9 8.7 M16.9 4.9 L10.3 8.7" stroke-width="1.3"/>
  <path d="M19.6 1 Q22.9 8.3 19.6 15.6" stroke-width="1.3"/>
</svg>

<!-- property panel -->
<div class="a" style="left:1494px;top:153px;width:375px;height:717px;background:#fff;border:1px solid #cfcfcf;border-top:none;box-shadow:0 0 48px rgba(0,0,0,0.12)"></div>
<div class="a" style="left:1495px;top:153px;width:373px;height:51px;background:#f3f3f3"></div>
<div class="a" style="left:1491px;top:156px;width:162px;height:48px;border:2px solid #f0b232;border-radius:7px"></div>
<div class="t" style="left:1505px;top:173px;font-size:14.3px;font-weight:700;color:#2a2a2a">sum( offered_ctc )</div>
<svg style="left:1837px;top:172px" width="18" height="18" viewBox="0 0 18 18" stroke="#333" stroke-width="1.7"><line x1="0.5" y1="0.5" x2="17.5" y2="17.5"/><line x1="17.5" y1="0.5" x2="0.5" y2="17.5"/></svg>

<div class="t" style="left:1505px;top:233px;font-size:15.5px;color:#3c3c3c">Aggregation</div>
<div class="a" style="left:1682px;top:224px;width:176px;height:34px;border:1px solid #d8d8d8;border-radius:4px;background:#fff"></div>
<div class="t" style="left:1692px;top:234px;font-size:15px;color:#333">Sum</div>
<svg style="left:1825px;top:237px" width="14" height="9" viewBox="0 0 14 9"><polyline points="1,1.5 7,7.5 13,1.5" fill="none" stroke="#222" stroke-width="1.8"/></svg>

<div class="t" style="left:1505px;top:278px;font-size:15.2px;color:#3c3c3c">Display Name</div>
<div class="a" style="left:1682px;top:269px;width:176px;height:34px;border:1px solid #d8d8d8;border-radius:4px;background:#fff"></div>

<div class="t" style="left:1505px;top:323px;font-size:15.2px;color:#3c3c3c">Series Type</div>
<svg style="left:1687px;top:317px" width="14" height="13" viewBox="0 0 14 13" fill="#222"><rect x="0" y="8" width="3.5" height="5" rx="0.5"/><rect x="5" y="4.5" width="3.5" height="8.5" rx="0.5"/><rect x="10" y="0" width="3.5" height="13" rx="0.5"/></svg>
<svg style="left:1726px;top:316px" width="16" height="15" viewBox="0 0 16 15" fill="none" stroke="#333" stroke-width="1.1"><polyline points="0.5,0 0.5,14.5 16,14.5"/><polyline points="2.5,11 6.5,6 9.5,8.5 14.5,3.5"/></svg>

<div class="t" style="left:1505px;top:360px;font-size:15.2px;color:#3c3c3c">Color</div>
<div class="a" style="left:1682px;top:351px;width:176px;height:35px;border:1px solid #d8d8d8;border-radius:4px;background:#fff"></div>
<div class="t" style="left:1505px;top:405px;font-size:15.2px;color:#3c3c3c">Data Label Color</div>
<div class="a" style="left:1682px;top:396px;width:176px;height:35px;border:1px solid #d8d8d8;border-radius:4px;background:#fff"></div>
<div class="t" style="left:1505px;top:450px;font-size:15.2px;color:#3c3c3c">Data Label Position</div>
<div class="a" style="left:1682px;top:441px;width:176px;height:35px;border:1px solid #d8d8d8;border-radius:4px;background:#fff"></div>
<div class="t" style="left:1692px;top:451px;font-size:15px;color:#333">Select</div>
<svg style="left:1825px;top:454px" width="14" height="9" viewBox="0 0 14 9"><polyline points="1,1.5 7,7.5 13,1.5" fill="none" stroke="#222" stroke-width="1.8"/></svg>
<div class="t" style="left:1505px;top:510px;font-size:15.2px;color:#3c3c3c">Conditional Colors</div>
<div class="t" style="left:1641px;top:508px;font-size:14px;color:#333">+</div>
<div class="a" style="left:1505px;top:548px;width:353px;height:1px;background:#cfcfcf"></div>

<!-- markers -->
<svg style="left:0;top:0" width="1916" height="875" viewBox="0 0 1916 875">
  <g fill="#f3a610">
    <path transform="translate(361,152)" d="M42 0 Q 26 -12, 7 -18.7 A 20 20 0 1 0 7 18.7 Q 26 12, 42 0 Z"/>
    <path transform="translate(1447,178)" d="M42 0 Q 26 -12, 7 -18.7 A 20 20 0 1 0 7 18.7 Q 26 12, 42 0 Z"/>
    <path transform="translate(676,86.5) rotate(9)" d="M42 0 Q 26 -12, 7 -18.7 A 20 20 0 1 0 7 18.7 Q 26 12, 42 0 Z"/>
  </g>
  <ellipse cx="717.5" cy="103.8" rx="13.4" ry="14.85" fill="#fff" stroke="#f3a610" stroke-width="3.7"/>
</svg>
<div class="t" style="left:345px;top:141.7px;width:40px;text-align:center;font-size:22px;color:#fff">1</div>
<div class="t" style="left:660.5px;top:76px;width:40px;text-align:center;font-size:22px;color:#fff">2</div>
<div class="t" style="left:1431px;top:167.7px;width:40px;text-align:center;font-size:22px;color:#fff">3</div>
<div class="a" style="left:716px;top:96.5px;width:4px;height:4px;border-radius:2px;background:#111"></div><div class="a" style="left:716px;top:102px;width:4px;height:4px;border-radius:2px;background:#111"></div><div class="a" style="left:716px;top:107.5px;width:4px;height:4px;border-radius:2px;background:#111"></div>

<!-- bottom teal line -->
<div class="a" style="left:0;top:872px;width:1916px;height:3px;background:#c9eded;border-top:1px solid #a0c8c8"></div>

</body></html>
